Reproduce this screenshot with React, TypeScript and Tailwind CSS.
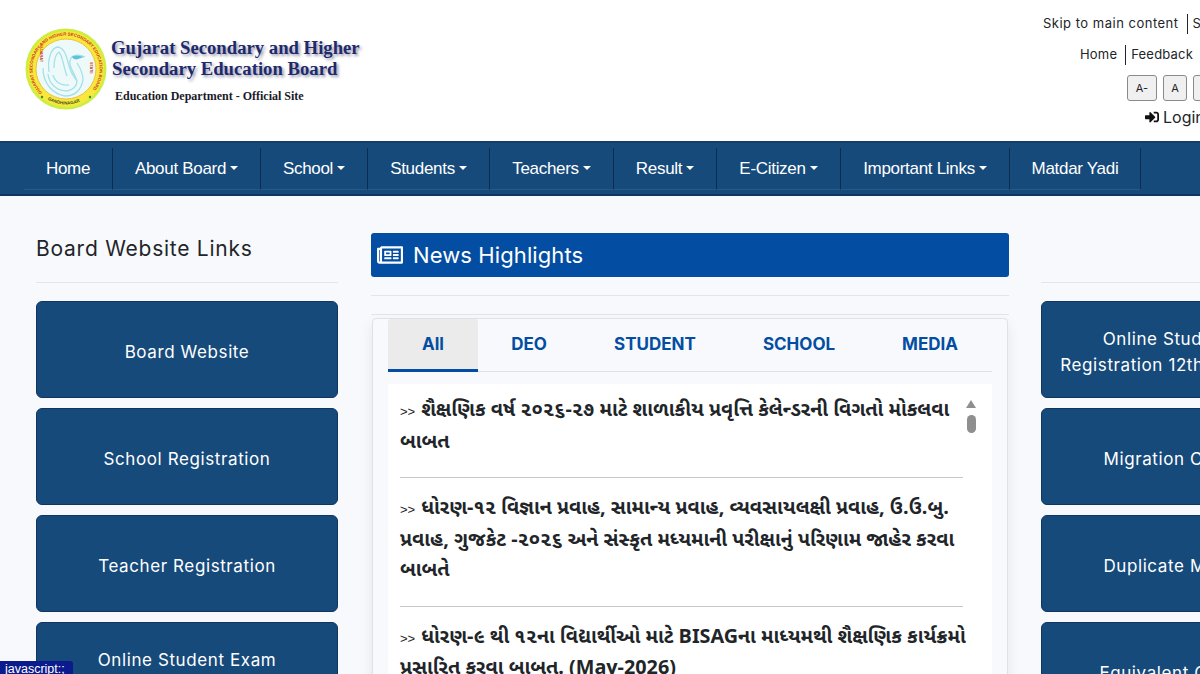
import { FaRegNewspaper, FaSignInAlt } from 'react-icons/fa'

const UI_FONT = "font-['Inter','Noto_Sans',sans-serif]"

const navItems = [
  { label: 'Home', width: 'w-[89px]' },
  { label: 'About Board', caret: true, width: 'w-[148px]' },
  { label: 'School', caret: true, width: 'w-[107px]' },
  { label: 'Students', caret: true, width: 'w-[122px]' },
  { label: 'Teachers', caret: true, width: 'w-[124px]' },
  { label: 'Result', caret: true, width: 'w-[103px]' },
  { label: 'E-Citizen', caret: true, width: 'w-[124px]' },
  { label: 'Important Links', caret: true, width: 'w-[169px]' },
  { label: 'Matdar Yadi', width: 'w-[131px]' },
]

const leftLinks = ['Board Website', 'School Registration', 'Teacher Registration', 'Online Student Exam\nRegistration']
const rightLinks = [
  'Online Student Exam\nRegistration 12th Science Pass',
  'Migration Certificate',
  'Duplicate Marksheet',
  'Equivalent Certificate',
]

const tabs = [
  { label: 'All', width: 'w-[90px]', active: true },
  { label: 'DEO', width: 'w-[102px]' },
  { label: 'STUDENT', width: 'w-[150px]' },
  { label: 'SCHOOL', width: 'w-[138px]' },
  { label: 'MEDIA', width: 'w-[124px]' },
]

const news = [
  'શૈક્ષણિક વર્ષ ૨૦૨૬-૨૭ માટે શાળાકીય પ્રવૃત્તિ કેલેન્ડરની વિગતો મોકલવા બાબત',
  'ધોરણ-૧૨ વિજ્ઞાન પ્રવાહ, સામાન્ય પ્રવાહ, વ્યવસાયલક્ષી પ્રવાહ, ઉ.ઉ.બુ. પ્રવાહ, ગુજકેટ -૨૦૨૬ અને સંસ્કૃત મધ્યમાની પરીક્ષાનું પરિણામ જાહેર કરવા બાબતે',
  'ધોરણ-૯ થી ૧૨ના વિદ્યાર્થીઓ માટે BISAGના માધ્યમથી શૈક્ષણિક કાર્યક્રમો પ્રસારિત કરવા બાબત. (May-2026)',
]

function Logo() {
  return (
    <svg width="82" height="82" viewBox="0 0 82 82" className="shrink-0">
      <defs>
        <path id="ringTop" d="M 17.3 64.7 A 33.5 33.5 0 1 1 64.7 64.7" />
        <path id="ringBottom" d="M 22 71 A 35.5 35.5 0 0 0 60 71" />
      </defs>
      <circle cx="41" cy="41" r="40.5" fill="#cdee3e" />
      <circle cx="41" cy="41" r="38" fill="#f8e73c" />
      <circle cx="41" cy="41" r="30" fill="#eefafa" stroke="#eec23a" strokeWidth="1" />
      <text fontSize="4.4" fontWeight="700" fill="#c9401e" fontFamily="Liberation Sans, sans-serif">
        <textPath href="#ringTop">GUJARAT SECONDARY AND HIGHER SECONDARY EDUCATION BOARD</textPath>
      </text>
      <text fontSize="4.4" fontWeight="700" fill="#38551c" fontFamily="Liberation Sans, sans-serif">
        <textPath href="#ringBottom" startOffset="2%">GANDHINAGAR</textPath>
      </text>
      <circle cx="17" cy="69" r="1.2" fill="#3f8a2c" />
      <circle cx="65" cy="69" r="1.2" fill="#3f8a2c" />
      <text x="16" y="-15" fontSize="3.8" fontWeight="700" fill="#c9401e" fontFamily="Liberation Sans, sans-serif" transform="rotate(90)">
        GUJARAT
      </text>
      <text x="34" y="-65" fontSize="3.8" fontWeight="700" fill="#c9401e" fontFamily="Liberation Sans, sans-serif" transform="rotate(90)">
        STATE
      </text>
      <g fill="none" stroke="#a6e0ea" strokeWidth="1.3">
        <path d="M 24 44 C 22 30 27 19 33 19 C 40 20 42 30 44 38 C 46 46 50 50 52 53" />
        <path d="M 52 53 C 48 42 42 36 46 30 C 49 26 56 27 60 29" />
        <path d="M 29 40 C 29 32 31 26 34 24 C 38 28 38 38 42 48" />
        <path d="M 18 40 C 18 56 28 66 40 68 C 50 68 56 62 58 52 C 58 44 54 38 52 35" />
        <path d="M 23 46 C 24 56 32 63 42 63 C 48 62 52 58 52 53" />
        <path d="M 28 47 C 30 54 36 58 44 57" />
      </g>
      <path d="M 47 29 C 50 27 54 28 59 29 L 53 31 C 51 32 48 31 47 29 Z" fill="#5cc2da" />
    </svg>
  )
}

function LinkButton({ label }: { label: string }) {
  return (
    <div className="flex h-[97px] w-[302px] shrink-0 items-center justify-center whitespace-pre-line rounded-md border border-[#0f3560] bg-[#164a7b] pt-[4px] text-center text-[17px] leading-[26px] tracking-[0.6px] text-white">
      {label}
    </div>
  )
}

export default function App() {
  return (
    <div className={`relative h-[674px] w-[1200px] overflow-hidden bg-[#f8f9fc] ${UI_FONT}`}>
      <header className="flex h-[141px] w-[1500px] justify-between bg-white pl-[25px]">
        <div className="flex pt-[28px]">
          <Logo />
          <div className="ml-[4px] flex flex-col font-['Liberation_Serif',serif] font-bold">
            <div className="mt-[9px] text-[18.7px] leading-[21px] text-[#1d2a6b] [text-shadow:2px_2px_3px_#9a9ab0]">
              Gujarat Secondary and Higher
              <br />
              <span className="ml-[1px]">Secondary Education Board</span>
            </div>
            <div className="ml-[4px] mt-[10px] text-[12px] leading-[14px] text-[#1a1a2a]">
              Education Department - Official Site
            </div>
          </div>
        </div>
        <div className="flex w-[457px] flex-col items-start text-[13px] text-[#212529]">
          <div className="mt-[15px] flex h-[18px] items-center whitespace-nowrap">
            <span className="tracking-[0.5px]">Skip to main content</span>
            <span className="ml-[8px] border-l border-[#212529] pl-[5px] tracking-[0.5px]">Screen Reader Access</span>
          </div>
          <div className="ml-[37px] mt-[13px] flex h-[18px] items-center whitespace-nowrap">
            <span className="tracking-[0.2px]">Home</span>
            <span className="ml-[8px] border-l border-[#212529] pl-[5px] tracking-[0.2px]">Feedback</span>
          </div>
          <div className="ml-[84px] mt-[11px] flex gap-[6px] text-[11px]">
            <div className="flex h-[26px] w-[30px] items-center justify-center rounded-[3px] border border-[#8a8a8a] bg-[#f0f0f0]">A-</div>
            <div className="flex h-[26px] w-[24px] items-center justify-center rounded-[3px] border border-[#8a8a8a] bg-[#f0f0f0]">A</div>
            <div className="flex h-[26px] w-[30px] items-center justify-center rounded-[3px] border border-[#8a8a8a] bg-[#f0f0f0]">A+</div>
          </div>
          <div className="ml-[102px] mt-[6px] flex items-center gap-[4px] text-[16px] leading-[20px]">
            <FaSignInAlt className="text-[14px] text-[#111]" />
            <span>Login</span>
          </div>
        </div>
      </header>

      <nav className="flex h-[55px] border-y-2 border-y-[#0f3560] border-t-[#123e6a] bg-[#164a7b] pl-[24px] pt-[5px] font-['Liberation_Sans',sans-serif] text-[17px] tracking-[-0.3px] text-white">
        {navItems.map((item) => (
          <div
            key={item.label}
            className={`flex h-[42px] ${item.width} shrink-0 items-center justify-center border-r border-r-[#0d2c4e] border-b border-b-[#255b8c]`}
          >
            {item.label}
            {item.caret && (
              <span className="ml-[4px] mt-[-2px] h-0 w-0 border-x-[4.5px] border-t-[4.5px] border-x-transparent border-t-white" />
            )}
          </div>
        ))}
      </nav>

      <main className="flex w-[1400px] items-start pl-[36px]">
        <section className="w-[302px] shrink-0">
          <h2 className="h-[87px] border-b border-[#e3e5e8] pt-[38px] text-[21px] leading-[30px] tracking-[0.75px] text-[#212529]">
            Board Website Links
          </h2>
          <div className="mt-[18px] flex flex-col gap-[10px]">
            {leftLinks.map((label) => (
              <LinkButton key={label} label={label} />
            ))}
          </div>
        </section>

        <section className="ml-[33px] w-[638px] shrink-0">
          <div className="mt-[37px] flex h-[44px] items-center rounded-[3px] bg-[#034ea2] pl-[6px] text-[22px] tracking-[0.1px] text-white">
            <FaRegNewspaper className="text-[26px]" />
            <span className="ml-[10px]">News Highlights</span>
          </div>
          <div className="mt-[18px] h-[20px] border-y border-[#e3e5e8]" />
          <div className="ml-[1px] mt-[3px] w-[636px] rounded-t-[4px] border border-[#dfe1e6] bg-[#f8f9fc] px-[15px] shadow-[0_6px_14px_rgba(0,0,0,0.08)]">
            <div className="flex h-[53px] w-[604px] border-b border-[#dfe1e4] text-[17px] font-bold text-[#034ea2]">
              {tabs.map((tab) => (
                <div
                  key={tab.label}
                  className={`flex h-[53px] ${tab.width} items-center justify-center ${
                    tab.active ? 'rounded-t-[3px] border-b-[3px] border-[#034ea2] bg-[#ebebeb] pt-[2px]' : 'pb-[2px]'
                  }`}
                >
                  {tab.label}
                </div>
              ))}
            </div>
            <div className="relative mt-[12px] h-[300px] w-[604px] overflow-hidden bg-white px-[12px] pt-[12px]">
              <div className="w-[563px]">
                {news.map((text) => (
                  <div
                    key={text}
                    className="mb-[16px] border-b border-[#c8c8c8] pb-[19px] font-['Noto_Sans_Gujarati','Noto_Sans',sans-serif] text-[19.8px] font-bold leading-[30.5px] text-[#212529] last:mr-[-10px] last:border-b-0"
                  >
                    <span className="mr-[6px] font-['Liberation_Sans',sans-serif] text-[13px] font-normal">&gt;&gt;</span>
                    {text}
                  </div>
                ))}
              </div>
              <div className="absolute left-[578px] top-[16px] h-0 w-0 border-x-[5.5px] border-b-[8px] border-x-transparent border-b-[#8f8f8f]" />
              <div className="absolute left-[579px] top-[31px] h-[18px] w-[9px] rounded-full bg-[#8f8f8f]" />
            </div>
          </div>
        </section>

        <section className="ml-[32px] w-[302px] shrink-0">
          <div className="h-[87px] border-b border-[#e3e5e8]" />
          <div className="mt-[18px] flex flex-col gap-[10px]">
            {rightLinks.map((label) => (
              <LinkButton key={label} label={label} />
            ))}
          </div>
        </section>
      </main>

      <div className="absolute bottom-0 left-0 h-[13px] w-[73px] overflow-hidden rounded-tr-[3px] bg-[#0b1a8c] pl-[5px] font-['Liberation_Sans',sans-serif] text-[12.5px] leading-[17px] text-white">
        javascript:;
      </div>
    </div>
  )
}
